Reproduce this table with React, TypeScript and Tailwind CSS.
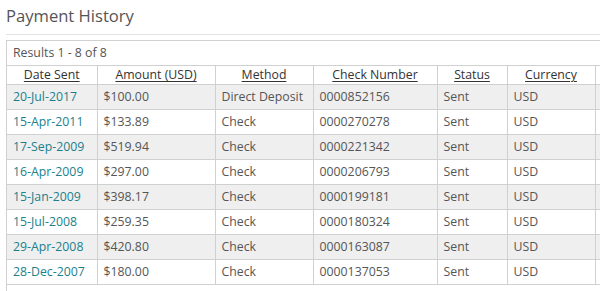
const rows = [
  ["20-Jul-2017", "$100.00", "Direct Deposit", "0000852156"],
  ["15-Apr-2011", "$133.89", "Check", "0000270278"],
  ["17-Sep-2009", "$519.94", "Check", "0000221342"],
  ["16-Apr-2009", "$297.00", "Check", "0000206793"],
  ["15-Jan-2009", "$398.17", "Check", "0000199181"],
  ["15-Jul-2008", "$259.35", "Check", "0000180324"],
  ["29-Apr-2008", "$420.80", "Check", "0000163087"],
  ["28-Dec-2007", "$180.00", "Check", "0000137053"],
];

const headers = ["Date Sent", "Amount (USD)", "Method", "Check Number", "Status", "Currency", ""];
const widths = ["w-[90px]", "w-[118px]", "w-[98px]", "w-[124px]", "w-[70px]", "w-[88px]", "w-[40px]"];

export default function App() {
  return (
    <div className="h-[291px] w-[600px] overflow-hidden bg-white font-['Open_Sans',sans-serif] text-[12.3px] text-[#555]">
      <div className="pl-[6px] pt-[4px]">
        <h1 className="h-[30px] text-[16.6px] leading-[24px] text-[#555]">Payment History</h1>
        <div className="w-[640px] border-t border-[#e3e3e3]" />
        <div className="mt-[5px] w-[640px] border border-[#d0d0d0]">
          <div className="flex h-[24px] items-center pl-[6px] pt-px text-[#555]">Results 1 - 8 of 8</div>
          <table className="w-[628px] table-fixed border-collapse whitespace-nowrap">
            <thead>
              <tr className="h-[19px]">
                {headers.map((h, i) => (
                  <th
                    key={i}
                    className={`${widths[i]} border border-l-0 border-[#d0d0d0] p-0 text-center font-normal leading-[16px] text-[#333]`}
                  >
                    <span className="underline underline-offset-2">{h}</span>
                  </th>
                ))}
              </tr>
            </thead>
            <tbody>
              {rows.map((r, i) => (
                <tr key={i} className={i % 2 === 0 ? "h-[25px] bg-[#efefef]" : "h-[25px] bg-white"}>
                  <td className="border border-l-0 border-[#d0d0d0] px-[6px] py-0 leading-[16px] text-[#1b7f8c]">{r[0]}</td>
                  <td className="border border-[#d0d0d0] px-[6px] py-0 leading-[16px]">{r[1]}</td>
                  <td className="border border-[#d0d0d0] px-[6px] py-0 leading-[16px]">{r[2]}</td>
                  <td className="border border-[#d0d0d0] px-[6px] py-0 leading-[16px]">{r[3]}</td>
                  <td className="border border-[#d0d0d0] px-[6px] py-0 leading-[16px]">Sent</td>
                  <td className="border border-[#d0d0d0] px-[6px] py-0 leading-[16px]">USD</td>
                  <td className="border border-[#d0d0d0] px-[6px] py-0"></td>
                </tr>
              ))}
            </tbody>
          </table>
          <div className="h-[20px]" />
        </div>
      </div>
    </div>
  );
}
